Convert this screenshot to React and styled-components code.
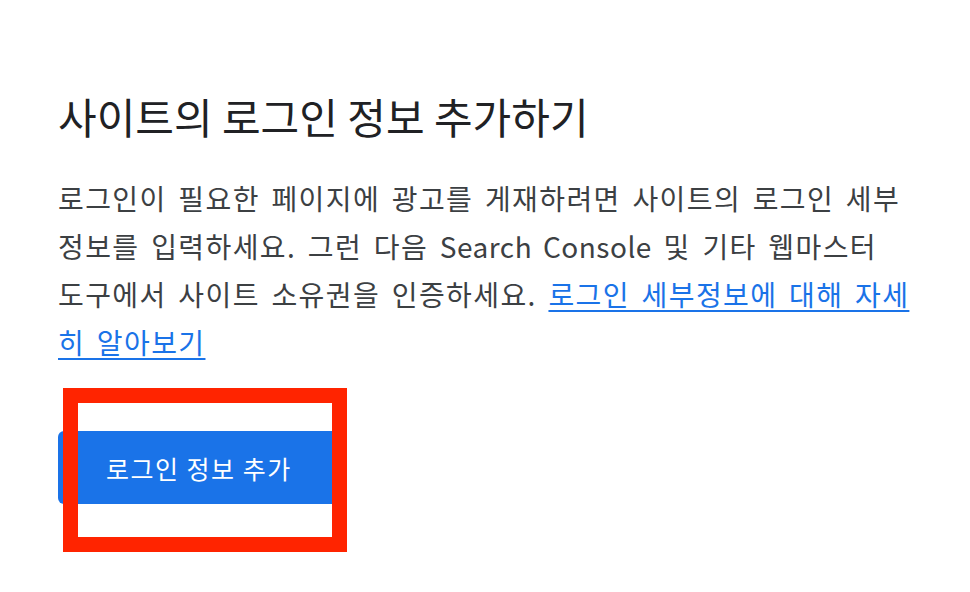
import React from "react";
import styled, { createGlobalStyle } from "styled-components";

const GlobalStyle = createGlobalStyle`
  html, body {
    margin: 0;
    padding: 0;
    background: #fff;
  }
  body {
    font-family: "Noto Sans CJK KR", "Noto Sans", sans-serif;
  }
`;

const Page = styled.div`
  width: 970px;
  height: 592px;
  box-sizing: border-box;
  padding: 88px 0 0 58px;
  overflow: hidden;
`;

const Title = styled.h1`
  margin: 0;
  font-size: 42px;
  font-weight: 400;
  line-height: 56px;
  color: #202124;
`;

const Description = styled.p`
  margin: 30px 0 0;
  font-size: 28px;
  line-height: 48px;
  letter-spacing: 1.4px;
  word-spacing: 4px;
  white-space: nowrap;
  color: #3c4043;
`;

const Latin = styled.span`
  letter-spacing: 0.5px;
`;

const Link = styled.a`
  color: #1a73e8;
  text-decoration: underline;
  text-underline-offset: 4px;
`;

const ButtonArea = styled.div`
  position: relative;
  margin-top: 65px;
  display: inline-block;
`;

const Button = styled.button`
  display: block;
  height: 73px;
  padding: 0 48px;
  border: none;
  border-radius: 6px;
  background: #1a73e8;
  color: #fff;
  font-family: inherit;
  font-size: 25px;
  letter-spacing: 1.5px;
  cursor: pointer;
`;

const Highlight = styled.div`
  position: absolute;
  left: 5px;
  right: -7px;
  top: -43px;
  bottom: -48px;
  border: 15px solid #ff2400;
  pointer-events: none;
`;

export default function App() {
  return (
    <>
      <GlobalStyle />
      <Page>
        <Title>사이트의 로그인 정보 추가하기</Title>
        <Description>
          로그인이 필요한 페이지에 광고를 게재하려면 사이트의 로그인 세부
          <br />
          정보를 입력하세요. 그런 다음 <Latin>Search Console</Latin> 및 기타
          웹마스터
          <br />
          도구에서 사이트 소유권을 인증하세요.{" "}
          <Link href="#">
            로그인 세부정보에 대해 자세
            <br />히 알아보기
          </Link>
        </Description>
        <ButtonArea>
          <Button>로그인 정보 추가</Button>
          <Highlight />
        </ButtonArea>
      </Page>
    </>
  );
}
